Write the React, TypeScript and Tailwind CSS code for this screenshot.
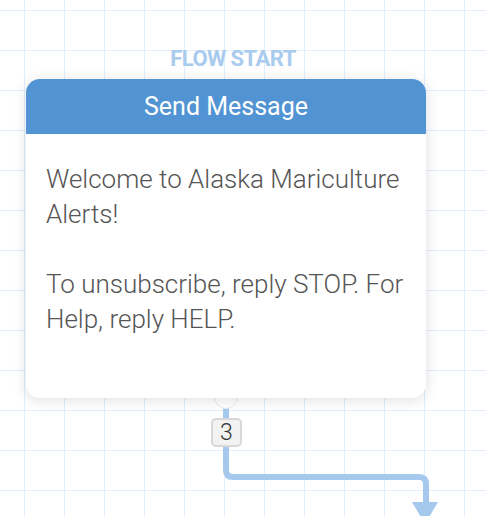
export default function App() {
    return (
        <div
            className="relative w-[486px] h-[516px] overflow-hidden bg-white bg-[linear-gradient(to_right,#e0eefd_1px,transparent_1px),linear-gradient(to_bottom,#e0eefd_1px,transparent_1px)] bg-size-[40px_40px] bg-position-[24px_10px]"
            style={{ fontFamily: 'Roboto, "Liberation Sans", sans-serif' }}
        >
            {/* Connector */}
            <svg className="absolute inset-0" width="486" height="516" viewBox="0 0 486 516">
                <path
                    d="M226 400 V470 Q226 477 233 477 H419 Q426 477 426 484 V505"
                    fill="none"
                    stroke="#a4c9ec"
                    strokeWidth="6"
                />
                <polygon points="412,502 438,502 425,524" fill="#a4c9ec" />
            </svg>

            {/* Node group */}
            <div className="absolute left-[26px] top-[46px] w-[400px] flex flex-col items-center">
                <div className="ml-[14px] text-[22px] leading-[26px] font-bold text-[#a8cbee] tracking-tight">
                    FLOW START
                </div>

                <div className="relative z-10 mt-[7px] w-full rounded-[14px] bg-white shadow-[0_2px_14px_rgba(0,0,0,0.13)]">
                    <div className="h-[55px] rounded-t-[14px] bg-[#5294d3] flex items-center justify-center text-white text-[25px]">
                        Send Message
                    </div>
                    <div className="pl-5 pr-2 pt-[28px] pb-[61px] text-[26px] leading-[35px] font-light text-[#555]">
                        <p>Welcome to Alaska Mariculture Alerts!</p>
                        <p className="mt-[35px]">To unsubscribe, reply STOP. For Help, reply HELP.</p>
                    </div>
                </div>

                {/* Exit port */}
                <div className="-mt-[13px] w-[24px] h-[24px] rounded-full bg-white border border-[#e3ecf5]" />

                {/* Count badge */}
                <div className="mt-[9px] ml-px w-[31px] h-[29px] rounded-[5px] bg-[#f2f2f2] border-2 border-[#d8d8d8] flex items-center justify-center text-[23px] leading-none font-light text-[#333]">
                    3
                </div>
            </div>
        </div>
    );
}
